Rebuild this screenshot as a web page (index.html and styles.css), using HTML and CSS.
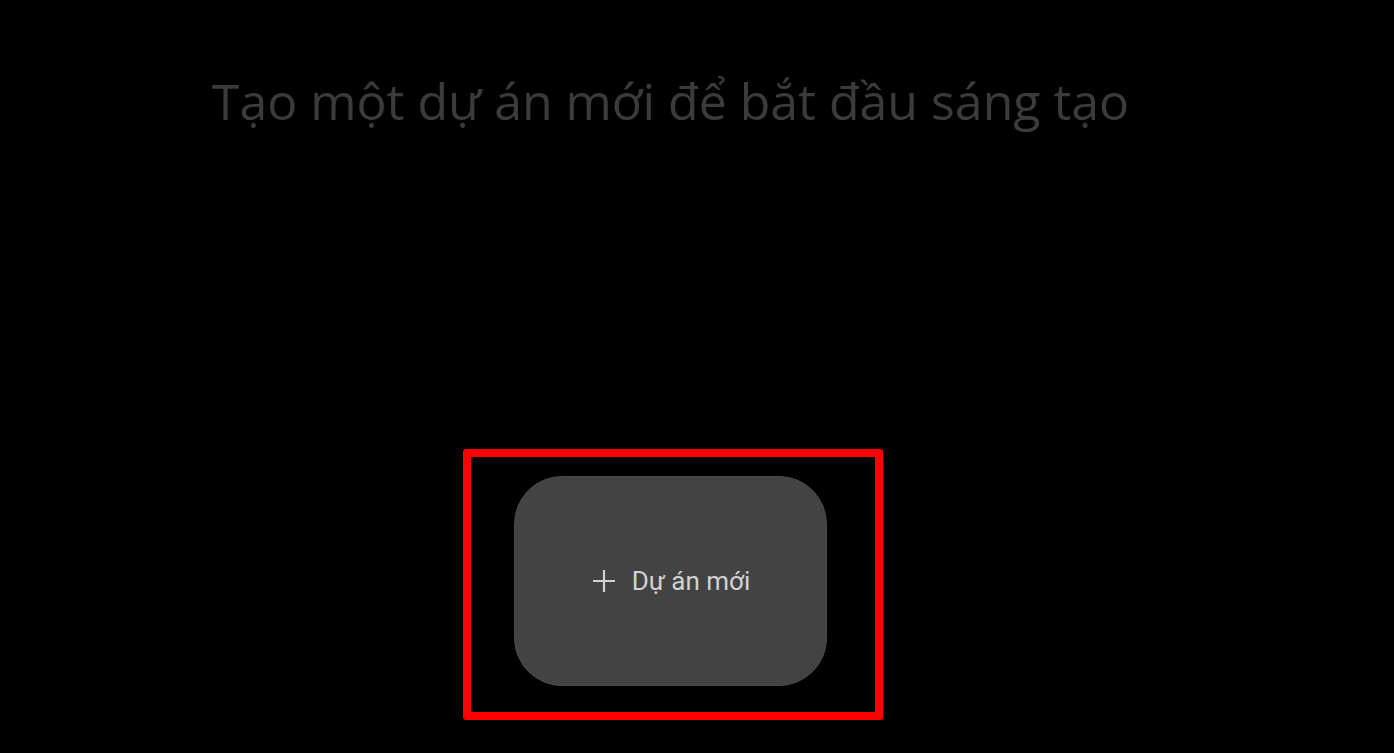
FILE: index.html
```html
<!DOCTYPE html>
<html lang="vi">
<head>
<meta charset="utf-8">
<title>Dự án mới</title>
<link rel="stylesheet" href="styles.css">
</head>
<body>
<main class="page">
  <h1 class="title">Tạo một dự án mới để bắt đầu sáng tạo</h1>
  <div class="highlight">
    <button class="new-project" type="button">
      <svg class="plus" width="22" height="22" viewBox="0 0 22 22" aria-hidden="true">
        <path d="M11 0v22M0 11h22" stroke="currentColor" stroke-width="2.2" fill="none"/>
      </svg>
      <span class="label">Dự án mới</span>
    </button>
  </div>
</main>
</body>
</html>
```

FILE: styles.css
```css
html, body {
  margin: 0;
  padding: 0;
  background: #000;
  height: 100%;
}

.page {
  box-sizing: border-box;
  height: 753px;
  padding: 67px 53px 0 0;
  display: flex;
  flex-direction: column;
  align-items: center;
  overflow: hidden;
}

.title {
  margin: 0;
  font-family: "Open Sans", "Noto Sans", sans-serif;
  font-weight: 400;
  font-size: 50px;
  line-height: 68px;
  color: #3b3b3b;
  letter-spacing: 0;
  white-space: nowrap;
}

.highlight {
  margin-top: 314px;
  margin-left: 5px;
  border: 8px solid #ff0000;
  border-radius: 3px;
  padding: 19px 48px 26px 43px;
}

.new-project {
  width: 313px;
  height: 210px;
  box-sizing: border-box;
  border: 1px solid #4a4a4a;
  border-radius: 48px;
  background: #434343;
  color: #d2d2d2;
  display: flex;
  align-items: center;
  justify-content: center;
  gap: 17px;
  padding: 0 0 0 2px;
  cursor: pointer;
}

.plus {
  display: block;
  color: #d2d2d2;
}

.label {
  font-family: Roboto, "Noto Sans", sans-serif;
  font-size: 26px;
  line-height: 30px;
  color: #d2d2d2;
}
```
